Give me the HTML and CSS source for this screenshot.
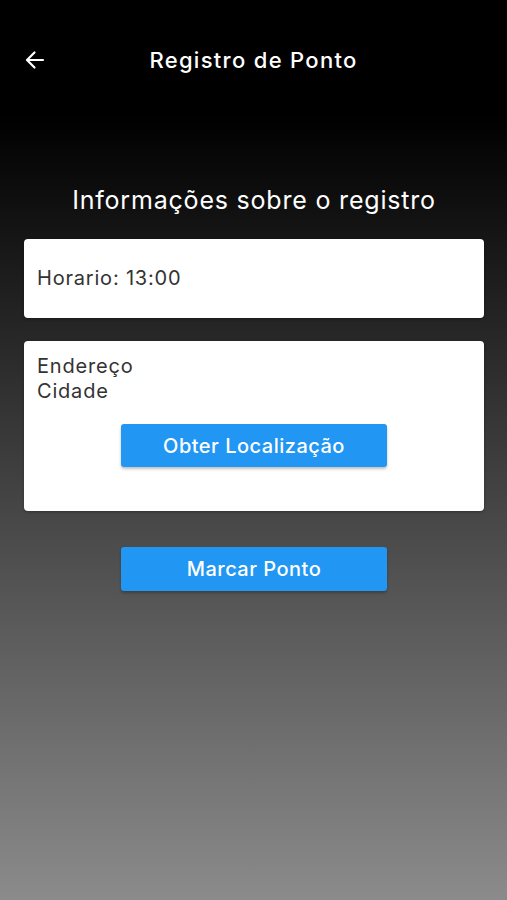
FILE: index.html
```html
<!DOCTYPE html>
<html lang="pt-BR">
<head>
  <meta charset="UTF-8">
  <meta name="viewport" content="width=device-width, initial-scale=1.0">
  <title>Registro de Ponto</title>
  <link rel="stylesheet" href="styles.css">
</head>
<body>
  <div class="screen">
    <header class="app-bar">
      <button class="back-btn" aria-label="Voltar">
        <svg viewBox="0 0 24 24" width="24" height="24" fill="none" stroke="#ffffff" stroke-width="2.2" stroke-linecap="round" stroke-linejoin="round">
          <path d="M20 12H4.5"/>
          <path d="M11.5 4.5L4 12l7.5 7.5"/>
        </svg>
      </button>
      <h1 class="app-title">Registro de Ponto</h1>
      <div class="app-bar-spacer"></div>
    </header>

    <main class="content">
      <h2 class="section-title">Informações sobre o registro</h2>

      <div class="card card-time">
        <p class="card-text">Horario: 13:00</p>
      </div>

      <div class="card card-location">
        <p class="card-text">Endereço</p>
        <p class="card-text">Cidade</p>
        <div class="card-actions">
          <button class="btn-primary">Obter Localização</button>
        </div>
      </div>

      <div class="main-action">
        <button class="btn-primary">Marcar Ponto</button>
      </div>
    </main>
  </div>
</body>
</html>
```

FILE: styles.css
```css
* {
  margin: 0;
  padding: 0;
  box-sizing: border-box;
}

body {
  width: 507px;
  min-height: 900px;
  font-family: 'Inter', 'Roboto', 'Noto Sans', sans-serif;
  background: linear-gradient(180deg, #000000 0px, #000000 115px, #8b8b8b 900px);
  color: #ffffff;
  overflow: hidden;
}

.screen {
  display: flex;
  flex-direction: column;
  min-height: 900px;
}

.app-bar {
  height: 120px;
  display: grid;
  grid-template-columns: 72px 1fr 72px;
  align-items: center;
}

.back-btn {
  background: none;
  border: none;
  width: 72px;
  height: 48px;
  display: flex;
  align-items: center;
  justify-content: center;
  margin-left: -1px;
  cursor: pointer;
}

.app-title {
  font-size: 22px;
  font-weight: 500;
  text-align: center;
  color: #ffffff;
  letter-spacing: 1.3px;
}

.content {
  padding: 65px 23px 0 24px;
  display: flex;
  flex-direction: column;
}

.section-title {
  font-size: 25px;
  font-weight: 400;
  text-align: center;
  color: #ffffff;
  letter-spacing: 0.8px;
  margin-bottom: 24px;
}

.card {
  background: #ffffff;
  border-radius: 4px;
  padding: 0 13px;
  box-shadow: 0 1px 3px rgba(0, 0, 0, 0.3);
}

.card-text {
  font-size: 20px;
  color: #333333;
  line-height: 25px;
  letter-spacing: 0.8px;
}

.card-time {
  height: 79px;
  display: flex;
  align-items: center;
  margin-bottom: 23px;
}

.card-location {
  height: 170px;
  padding-top: 13px;
}

.card-actions {
  display: flex;
  justify-content: center;
  margin-top: 20px;
}

.btn-primary {
  width: 266px;
  height: 43px;
  background: #2196f3;
  color: #ffffff;
  border: none;
  border-radius: 3px;
  font-family: inherit;
  font-size: 20px;
  font-weight: 500;
  letter-spacing: 0.5px;
  box-shadow: 0 2px 3px rgba(0, 0, 0, 0.25);
  cursor: pointer;
}

.main-action {
  display: flex;
  justify-content: center;
  margin-top: 36px;
}

.main-action .btn-primary {
  height: 44px;
}
```
